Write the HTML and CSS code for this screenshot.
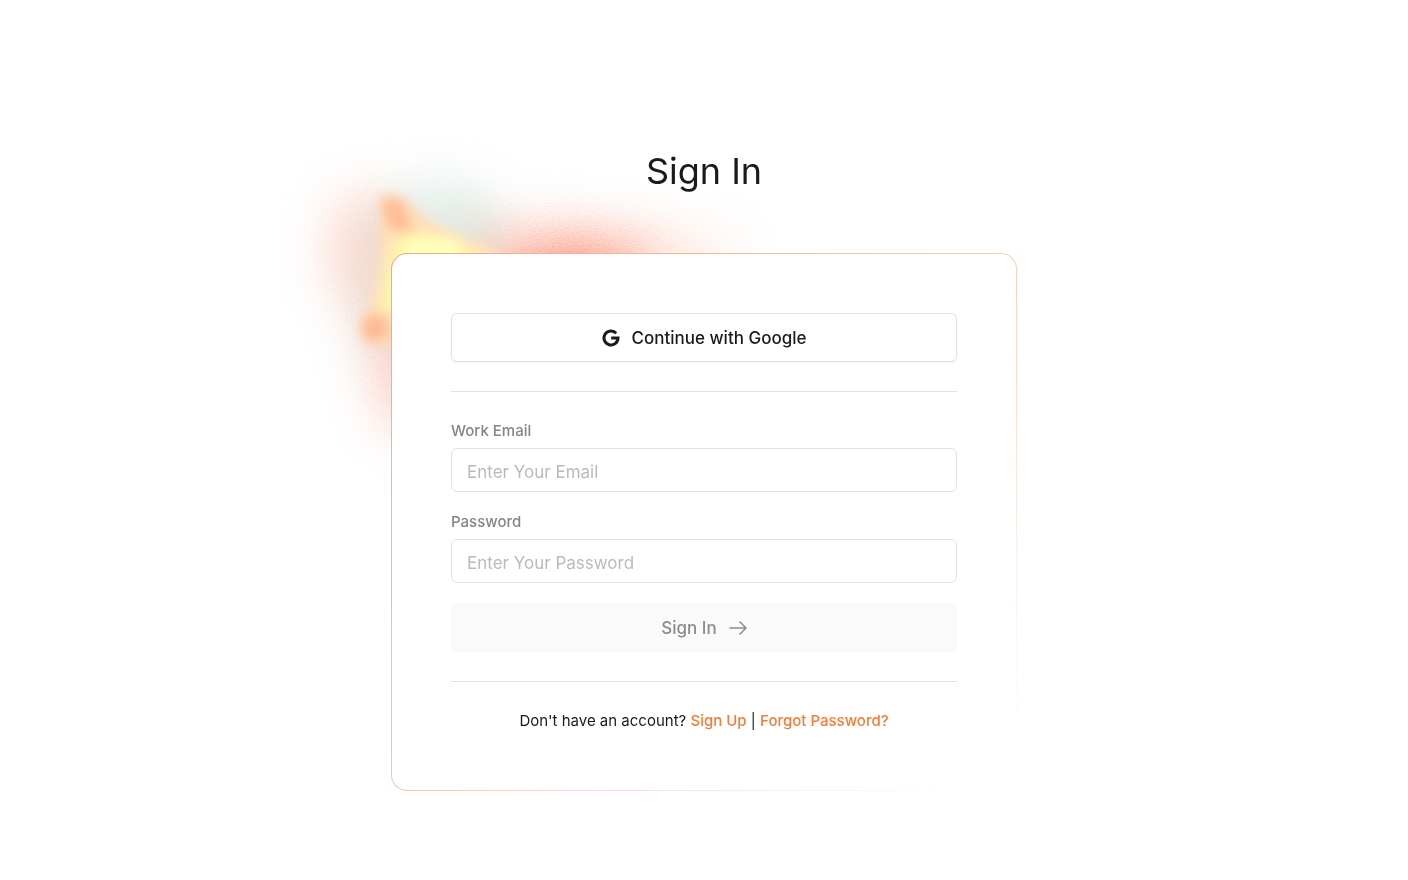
FILE: index.html
```
<!DOCTYPE html>
<html lang="en">
<head>
    <meta charset="UTF-8">
    <meta name="viewport" content="width=device-width, initial-scale=1.0">
    <title>Sign In</title>
    <link rel="stylesheet" href="styles.css">
</head>
<body>
    <main class="container">
        <h1>Sign In</h1>
        <div class="card-wrap">
            <svg class="glow" viewBox="260 110 560 400" aria-hidden="true">
                <defs>
                    <filter id="grain" x="260" y="110" width="560" height="400" filterUnits="userSpaceOnUse" color-interpolation-filters="sRGB">
                        <feGaussianBlur stdDeviation="23" result="soft"/>
                        <feTurbulence type="fractalNoise" baseFrequency="0.8" numOctaves="2" seed="4" result="noise"/>
                        <feDisplacementMap in="soft" in2="noise" scale="40" xChannelSelector="R" yChannelSelector="G"/>
                    </filter>
                    <filter id="blur6" x="260" y="110" width="560" height="400" filterUnits="userSpaceOnUse" color-interpolation-filters="sRGB">
                        <feGaussianBlur stdDeviation="6"/>
                    </filter>
                    <filter id="blur9" x="260" y="110" width="560" height="400" filterUnits="userSpaceOnUse" color-interpolation-filters="sRGB">
                        <feGaussianBlur stdDeviation="9"/>
                    </filter>
                </defs>
                <g filter="url(#grain)">
                    <ellipse cx="366" cy="250" rx="42" ry="62" fill="#ffc2b2" opacity="0.5"/>
                    <ellipse cx="436" cy="216" rx="60" ry="38" fill="#d8e6e0" opacity="0.6"/>
                    <ellipse cx="474" cy="232" rx="36" ry="28" fill="#d4e4d4" opacity="0.65"/>
                    <ellipse cx="382" cy="290" rx="32" ry="80" fill="#e4d0c2" opacity="0.6"/>
                    <ellipse cx="406" cy="370" rx="34" ry="66" fill="#f8b8a6" opacity="0.55"/>
                    <ellipse cx="640" cy="252" rx="104" ry="24" fill="#ffd8c8" opacity="0.45"/>
                    <ellipse cx="562" cy="266" rx="104" ry="44" fill="#ffa692" opacity="0.5"/>
                    <ellipse cx="566" cy="282" rx="56" ry="24" fill="#ff7658" opacity="0.8"/>
                </g>
                <ellipse cx="675" cy="260" rx="44" ry="6" fill="#fff0c8" opacity="0.6" filter="url(#blur6)"/>
                <path d="M382 200 Q392 188 412 206 Q444 236 506 256 L500 280 L410 346 L370 342 Q356 328 370 310 Q384 280 380 240 Z" fill="#ffdcb8" filter="url(#blur6)"/>
                <path d="M398 236 Q430 228 490 260 L470 300 L382 316 L388 268 Z" fill="#ffffa8" filter="url(#blur9)"/>
                <ellipse cx="434" cy="250" rx="28" ry="11" fill="#ffffbc" filter="url(#blur6)"/>
                <path d="M384 202L400 204L408 228L392 226Z" fill="#ffb893" stroke="#ffb893" stroke-width="6" opacity="0.9" filter="url(#blur6)"/>
                <circle cx="375" cy="328" r="13" fill="#ffb893" filter="url(#blur6)"/>
            </svg>
            <div class="card">
                <button type="button" class="btn btn-google">
                    <svg class="google-icon" viewBox="0 0 18 18" aria-hidden="true">
                        <path d="M14.2 4.3A7 7 0 1 0 16 9H9.2" fill="none" stroke="currentColor" stroke-width="3"/>
                    </svg>
                    Continue with Google
                </button>
                <hr>
                <form>
                    <div class="form-group">
                        <label for="email">Work Email</label>
                        <input type="email" id="email" placeholder="Enter Your Email">
                    </div>
                    <div class="form-group">
                        <label for="password">Password</label>
                        <input type="password" id="password" placeholder="Enter Your Password">
                    </div>
                    <button type="submit" class="btn btn-submit" disabled>
                        Sign In
                        <svg class="arrow-icon" viewBox="0 0 18 16" aria-hidden="true">
                            <path d="M1 8H17M11 2L17 8L11 14" fill="none" stroke="currentColor" stroke-width="1.5" stroke-linecap="round" stroke-linejoin="round"/>
                        </svg>
                    </button>
                </form>
                <hr>
                <p class="links">Don't have an account? <a href="#">Sign Up</a> | <a href="#">Forgot Password?</a></p>
            </div>
        </div>
    </main>
</body>
</html>
```
FILE: styles.css
```
* {
    box-sizing: border-box;
}
body {
    margin: 0;
    font-family: Inter, "Liberation Sans", sans-serif;
    color: #1a1a1a;
    background-color: #fff;
}
.container {
    max-width: 626px;
    margin: 0 auto;
    padding: 147px 0 40px;
}
h1 {
    position: relative;
    z-index: 1;
    margin: 0 0 58px;
    font-size: 36px;
    font-weight: 400;
    line-height: 48px;
    text-align: center;
}
.card-wrap {
    position: relative;
}
/* the glow sits behind the top left corner of the card */
.glow {
    position: absolute;
    top: -143px;
    left: -131px;
    width: 560px;
    height: 400px;
    pointer-events: none;
}
.card {
    position: relative;
    padding: 59px;
    border: 1px solid transparent;
    border-radius: 16px;
    background:
        linear-gradient(#fff, #fff) padding-box,
        linear-gradient(135deg, #f5a488 0%, #fac8b4 50%, #fdeae0 75%, #fff 95%) border-box;
}
.btn {
    display: flex;
    align-items: center;
    justify-content: center;
    gap: 12px;
    width: 100%;
    height: 49px;
    border-radius: 6px;
    font-family: inherit;
    font-size: 17px;
    font-weight: 500;
    cursor: pointer;
}
.btn-google {
    border: 1px solid #e3e3e3;
    background-color: #fff;
    color: #1a1a1a;
    box-shadow: 0 1px 2px rgba(0, 0, 0, 0.05);
}
.btn-submit {
    border: none;
    background-color: #fafafa;
    color: #8c8c8c;
    cursor: default;
}
.google-icon {
    width: 18px;
    height: 18px;
}
.arrow-icon {
    width: 18px;
    height: 16px;
}
hr {
    margin: 29px 0;
    border: none;
    border-top: 1px solid #e3e3e3;
}
.form-group {
    margin-bottom: 20px;
}
label {
    display: block;
    margin-bottom: 7px;
    font-size: 15px;
    font-weight: 500;
    line-height: 20px;
    color: #858585;
}
input {
    display: block;
    width: 100%;
    height: 44px;
    padding: 3px 15px 0;
    border: 1px solid #e3e3e3;
    border-radius: 6px;
    background-color: #fff;
    font-family: inherit;
    font-size: 17px;
    color: #1a1a1a;
}
input::placeholder {
    color: #bababa;
}
.links {
    margin: 0;
    font-size: 15px;
    line-height: 20px;
    text-align: center;
}
.links a {
    color: #f57c36;
    font-weight: 500;
    text-decoration: none;
}
```
